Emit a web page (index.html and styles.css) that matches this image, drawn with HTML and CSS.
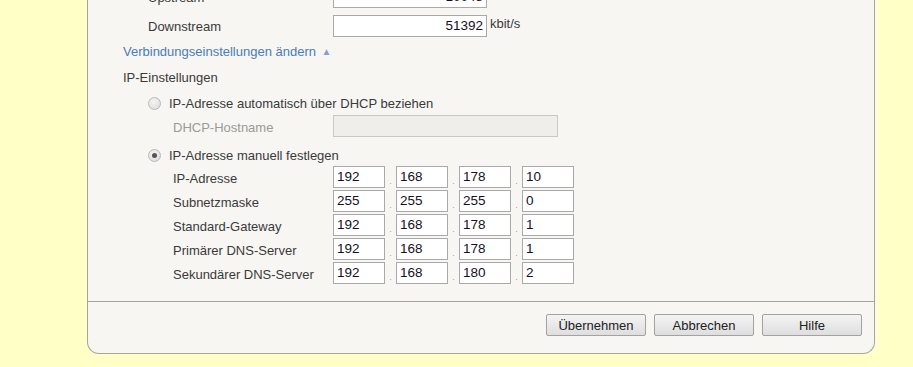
FILE: index.html
```html
<!DOCTYPE html>
<html lang="de">
<head>
<meta charset="utf-8">
<title>Internetzugang</title>
<link rel="stylesheet" href="styles.css">
</head>
<body>
<div class="panel">
  <div class="content">
    <div class="rate-row first">
      <span class="rate-label">Upstream</span>
      <span class="field rate-field">10048</span>
      <span class="unit">kbit/s</span>
    </div>
    <div class="rate-row">
      <span class="rate-label">Downstream</span>
      <span class="field rate-field">51392</span>
      <span class="unit">kbit/s</span>
    </div>
    <div class="toggle-link">Verbindungseinstellungen ändern <span class="tri">▲</span></div>
    <div class="section-title">IP-Einstellungen</div>
    <div class="radio-row r1"><span class="radio"></span><span class="radio-label">IP-Adresse automatisch über DHCP beziehen</span></div>
    <div class="sub-row host-row"><span class="sub-label disabled">DHCP-Hostname</span><span class="field host-field"></span></div>
    <div class="radio-row r2"><span class="radio checked"></span><span class="radio-label">IP-Adresse manuell festlegen</span></div>
    <div class="ip-rows">
      <div class="sub-row"><span class="sub-label">IP-Adresse</span><span class="field oct">192</span><span class="dot">.</span><span class="field oct">168</span><span class="dot">.</span><span class="field oct">178</span><span class="dot">.</span><span class="field oct">10</span></div>
      <div class="sub-row"><span class="sub-label">Subnetzmaske</span><span class="field oct">255</span><span class="dot">.</span><span class="field oct">255</span><span class="dot">.</span><span class="field oct">255</span><span class="dot">.</span><span class="field oct">0</span></div>
      <div class="sub-row"><span class="sub-label">Standard-Gateway</span><span class="field oct">192</span><span class="dot">.</span><span class="field oct">168</span><span class="dot">.</span><span class="field oct">178</span><span class="dot">.</span><span class="field oct">1</span></div>
      <div class="sub-row"><span class="sub-label">Primärer DNS-Server</span><span class="field oct">192</span><span class="dot">.</span><span class="field oct">168</span><span class="dot">.</span><span class="field oct">178</span><span class="dot">.</span><span class="field oct">1</span></div>
      <div class="sub-row"><span class="sub-label">Sekundärer DNS-Server</span><span class="field oct">192</span><span class="dot">.</span><span class="field oct">168</span><span class="dot">.</span><span class="field oct">180</span><span class="dot">.</span><span class="field oct">2</span></div>
    </div>
  </div>
  <div class="footer">
    <button class="btn">Übernehmen</button>
    <button class="btn">Abbrechen</button>
    <button class="btn">Hilfe</button>
  </div>
</div>
</body>
</html>
```
FILE: styles.css
```css
html, body {
  margin: 0;
  padding: 0;
  background: #ffffc6;
  height: 100%;
  overflow: hidden;
}
body {
  font-family: "Liberation Sans", Arial, sans-serif;
  font-size: 13px;
  color: #3a3a3a;
}
.panel {
  margin: -30px 0 0 87px;
  width: 786px;
  background: #f7f6f2;
  border: 1px solid #a4a79d;
  border-top: none;
  border-radius: 0 0 12px 12px;
  box-shadow: 1px 0 0 #fbfbe0, 5px 0 0 #ffffd2;
}
.content {
  padding: 0 0 17px 35px;
  display: flex;
  flex-direction: column;
  align-items: flex-start;
}
.field {
  box-sizing: border-box;
  display: inline-block;
  height: 22px;
  border: 1px solid #a9a9a9;
  background: #fff;
  color: #15101e;
  font-size: 13.5px;
  line-height: 20px;
  padding: 0 3px;
}
.rate-row {
  display: flex;
  align-items: center;
  height: 22px;
  margin-top: 7px;
}
.rate-row.first { margin-top: 16px; }
.rate-label {
  width: 210px;
  padding-left: 25px;
  box-sizing: border-box;
}
.rate-field {
  width: 154px;
  text-align: right;
}
.unit {
  margin-left: 3px;
  align-self: flex-start;
  line-height: 18px;
}
.toggle-link {
  color: #4a7db4;
  line-height: 16px;
  margin-top: 7px;
}
.tri {
  font-size: 10px;
  color: #7ea3ca;
  vertical-align: 1px;
  margin-left: 2px;
}
.section-title {
  line-height: 16px;
  margin-top: 10px;
}
.radio-row {
  display: flex;
  align-items: center;
  height: 16px;
  margin-left: 25px;
}
.radio-row.r1 { margin-top: 9px; }
.radio-row.r2 { margin-top: 10px; }
.radio {
  box-sizing: border-box;
  width: 13px;
  height: 13px;
  border-radius: 50%;
  border: 1px solid #b9b9b9;
  background: radial-gradient(circle at 40% 35%, #f4f4f4, #d8d8d8);
  position: relative;
  margin-right: 8px;
}
.radio.checked::after {
  content: "";
  position: absolute;
  left: 3px;
  top: 3px;
  width: 5px;
  height: 5px;
  border-radius: 50%;
  background: #555;
}
.sub-row {
  display: flex;
  align-items: center;
  height: 22px;
}
.host-row { margin-top: 4px; }
.sub-label {
  width: 210px;
  padding-left: 50px;
  box-sizing: border-box;
  padding-top: 2px;
}
.sub-label.disabled { color: #9a9a9a; }
.host-field {
  width: 225px;
  background: #efeeea;
  border-color: #c9c9c5;
}
.ip-rows {
  margin-top: 3px;
  display: flex;
  flex-direction: column;
  gap: 2px;
}
.oct { width: 52px; }
.dot {
  width: 11px;
  text-align: center;
  color: #a0a0a0;
  font-size: 9px;
  align-self: flex-end;
  line-height: 14px;
}
.footer {
  border-top: 1px solid #a4a79d;
  display: flex;
  justify-content: flex-end;
  gap: 8px;
  padding: 12px 12px 17px 0;
}
.btn {
  box-sizing: border-box;
  width: 100px;
  height: 22px;
  border: 1px solid #a2a2a2;
  border-radius: 2px;
  background: linear-gradient(#f4f4f4, #dedede);
  font-family: "Liberation Sans", Arial, sans-serif;
  font-size: 13px;
  color: #222;
  padding: 0;
}
```
